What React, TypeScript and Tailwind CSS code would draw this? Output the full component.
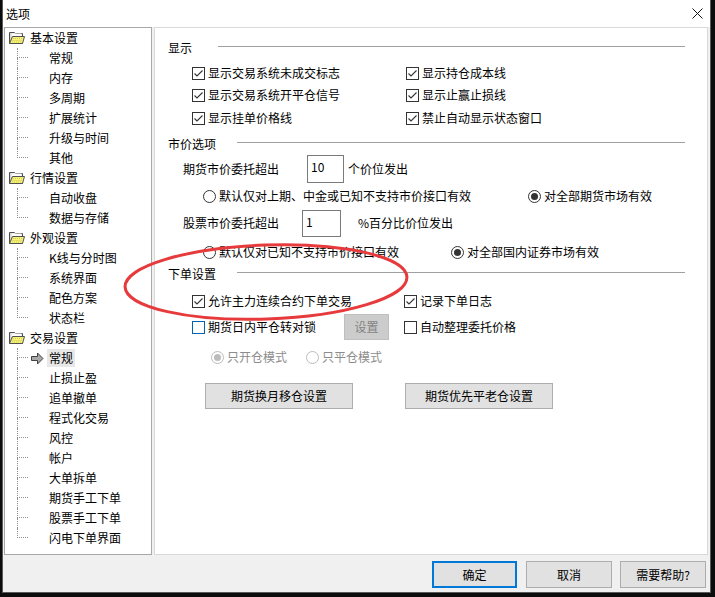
import React from "react";

const groups: { name: string; children: string[]; sel?: number }[] = [
  { name: "基本设置", children: ["常规", "内存", "多周期", "扩展统计", "升级与时间", "其他"] },
  { name: "行情设置", children: ["自动收盘", "数据与存储"] },
  { name: "外观设置", children: ["K线与分时图", "系统界面", "配色方案", "状态栏"] },
  {
    name: "交易设置",
    children: ["常规", "止损止盈", "追单撤单", "程式化交易", "风控", "帐户", "大单拆单", "期货手工下单", "股票手工下单", "闪电下单界面"],
    sel: 0,
  },
];

function Folder() {
  return (
    <svg width="16" height="14" viewBox="0 0 16 14" className="shrink-0">
      <path d="M0.5 1.5 H5.5 L6.5 2.5 H13.5 V12.5 H0.5 Z" fill="#d8d8d8" stroke="#505050" />
      <path d="M2.5 2.5 H12.5 V5.5 H2.5 Z" fill="#ffffff" />
      <path d="M3.5 5.5 H15.5 L13.5 12.5 H0.5 Z" fill="#f6f27a" stroke="#505050" />
      <path d="M4 7.5 H14 M3.5 9.5 H13.5 M3 11 H13" stroke="#c9c23a" strokeWidth="0.8" strokeDasharray="1 1" />
    </svg>
  );
}

function Arrow() {
  return (
    <svg width="13" height="13" viewBox="0 0 13 13" className="shrink-0">
      <path d="M0.5 4.5 H6.5 V1 L12 6.5 L6.5 12 V8.5 H0.5 Z" fill="#a8a8a8" stroke="#404040" />
    </svg>
  );
}

function Check({ checked, focus }: { checked?: boolean; focus?: boolean }) {
  return (
    <span
      className={
        focus
          ? "w-[13px] h-[13px] border border-[#0063b1] bg-white flex items-center justify-center shrink-0"
          : "w-[13px] h-[13px] border border-[#333333] bg-white flex items-center justify-center shrink-0"
      }
    >
      {checked && (
        <svg width="11" height="11" viewBox="0 0 11 11">
          <path d="M1.5 5.5 L4 8 L9.5 2.5" fill="none" stroke="#333333" strokeWidth="1.1" />
        </svg>
      )}
    </span>
  );
}

function Radio({ on, disabled }: { on?: boolean; disabled?: boolean }) {
  return (
    <span
      className={
        disabled
          ? "w-[13px] h-[13px] rounded-full border border-[#bcbcbc] bg-white flex items-center justify-center shrink-0"
          : "w-[13px] h-[13px] rounded-full border border-[#333333] bg-white flex items-center justify-center shrink-0"
      }
    >
      {on && (
        <span className={disabled ? "w-[7px] h-[7px] rounded-full bg-[#bcbcbc]" : "w-[7px] h-[7px] rounded-full bg-[#333333]"} />
      )}
    </span>
  );
}

function Header({ text, gap }: { text: string; gap: string }) {
  return (
    <div className="h-5 flex items-center ml-[13px] mr-[22px]">
      <span className="leading-none">{text}</span>
      <div className={`flex-1 h-px bg-[#a0a0a0] -mt-[3px] ${gap}`} />
    </div>
  );
}

function CheckItem({ label, checked, focus }: { label: string; checked?: boolean; focus?: boolean }) {
  return (
    <div className="flex items-center">
      <Check checked={checked} focus={focus} />
      <span className="ml-[3px] leading-none">{label}</span>
    </div>
  );
}

function RadioItem({ label, on, disabled }: { label: string; on?: boolean; disabled?: boolean }) {
  return (
    <div className="flex items-center">
      <Radio on={on} disabled={disabled} />
      <span className={disabled ? "ml-[3px] leading-none text-[#8c8c8c]" : "ml-[3px] leading-none"}>{label}</span>
    </div>
  );
}

export default function App() {
  return (
    <div className="relative w-[715px] h-[597px] bg-[#0c0c0c] overflow-hidden font-['Noto_Sans_CJK_SC',sans-serif] text-[12px] text-black">
      <div className="ml-[2px] w-[709px] h-[593px] border-l border-r border-b border-[#5a5a5a] bg-[#f0f0f0] flex flex-col">
        {/* title bar */}
        <div className="h-[27px] bg-white flex items-center justify-between pl-[3px] pr-[7px] shrink-0">
          <span className="leading-none">选项</span>
          <svg width="11" height="11" viewBox="0 0 11 11">
            <path d="M0.5 0.5 L10.5 10.5 M10.5 0.5 L0.5 10.5" stroke="#111" strokeWidth="1" />
          </svg>
        </div>
        {/* body */}
        <div className="flex pl-px pr-[2px] h-[528px] shrink-0">
          {/* tree */}
          <div className="w-[148px] h-full border border-[#a8a8a8] bg-white shrink-0">
            {groups.map((g) => (
              <div key={g.name}>
                <div className="h-5 flex items-center">
                  <span className="ml-[4px]">
                    <Folder />
                  </span>
                  <span className="ml-[5px] leading-none">{g.name}</span>
                </div>
                {g.children.map((c, i) => {
                  const last = i === g.children.length - 1;
                  const sel = g.sel === i;
                  return (
                    <div key={c + i} className="h-5 flex items-stretch">
                      <div className="w-[12px] shrink-0" />
                      <div className="w-[11px] flex flex-col shrink-0">
                        <div className="h-[10px] border-l border-b border-dotted border-[#909090]" />
                        {!last && <div className="flex-1 border-l border-dotted border-[#909090]" />}
                      </div>
                      <div className="w-[21px] flex items-center shrink-0">
                        {sel && (
                          <span className="ml-[3px]">
                            <Arrow />
                          </span>
                        )}
                      </div>
                      <div className="flex items-center">
                        {sel ? (
                          <span className="-ml-[2px] px-[2px] h-[18px] flex items-center bg-[#e8e8e8] leading-none">{c}</span>
                        ) : (
                          <span className="leading-none">{c}</span>
                        )}
                      </div>
                    </div>
                  );
                })}
              </div>
            ))}
          </div>
          {/* right panel */}
          <div className="ml-[2px] flex-1 h-full border border-[#d9d9d9] bg-white pt-[10px] flex flex-col">
            <Header text="显示" gap="ml-[26px]" />
            <div className="mt-[5px] h-5 flex items-center ml-[37px]">
              <div className="w-[214px]">
                <CheckItem label="显示交易系统未成交标志" checked />
              </div>
              <CheckItem label="显示持仓成本线" checked />
            </div>
            <div className="mt-[2px] h-5 flex items-center ml-[37px]">
              <div className="w-[214px]">
                <CheckItem label="显示交易系统开平仓信号" checked />
              </div>
              <CheckItem label="显示止赢止损线" checked />
            </div>
            <div className="mt-[3px] h-5 flex items-center ml-[37px]">
              <div className="w-[214px]">
                <CheckItem label="显示挂单价格线" checked />
              </div>
              <CheckItem label="禁止自动显示状态窗口" checked />
            </div>
            <div className="mt-[6px]">
              <Header text="市价选项" gap="ml-[21px]" />
            </div>
            <div className="mt-px h-[28px] flex items-center ml-[28px]">
              <span className="w-[124px] leading-none">期货市价委托超出</span>
              <div className="w-[37px] h-[28px] border border-[#7a7a7a] bg-white pl-[3px] pt-[4px] leading-[14px]">10</div>
              <span className="ml-[4px] leading-none">个价位发出</span>
            </div>
            <div className="mt-[3px] h-5 flex items-center ml-[48px]">
              <div className="w-[325px]">
                <RadioItem label="默认仅对上期、中金或已知不支持市价接口有效" />
              </div>
              <RadioItem label="对全部期货市场有效" on />
            </div>
            <div className="mt-[3px] h-[28px] flex items-center ml-[28px]">
              <span className="w-[119px] leading-none">股票市价委托超出</span>
              <div className="w-[39px] h-[27px] border border-[#7a7a7a] bg-white pl-[3px] pt-[4px] leading-[14px]">1</div>
              <span className="ml-[17px] leading-none">%百分比价位发出</span>
            </div>
            <div className="mt-[5px] h-5 flex items-center ml-[48px]">
              <div className="w-[248px]">
                <RadioItem label="默认仅对已知不支持市价接口有效" />
              </div>
              <RadioItem label="对全部国内证券市场有效" on />
            </div>
            <div className="mt-[2px]">
              <Header text="下单设置" gap="ml-[21px]" />
            </div>
            <div className="mt-[7px] h-5 flex items-center ml-[37px]">
              <div className="w-[212px]">
                <CheckItem label="允许主力连续合约下单交易" checked />
              </div>
              <CheckItem label="记录下单日志" checked />
            </div>
            <div className="mt-[3px] h-[26px] flex items-center ml-[37px]">
              <div className="w-[212px] flex items-center">
                <div className="w-[152px]">
                  <CheckItem label="期货日内平仓转对锁" focus />
                </div>
                <div className="w-[45px] h-[26px] border border-[#bfbfbf] bg-[#cccccc] text-[#838383] flex items-center justify-center leading-none">
                  设置
                </div>
              </div>
              <CheckItem label="自动整理委托价格" />
            </div>
            <div className="mt-[7px] h-5 flex items-center ml-[56px]">
              <div className="w-[95px]">
                <RadioItem label="只开仓模式" on disabled />
              </div>
              <RadioItem label="只平仓模式" disabled />
            </div>
            <div className="mt-[16px] h-[26px] flex items-center ml-[50px]">
              <div className="w-[148px] h-[26px] border border-[#adadad] bg-[#e1e1e1] flex items-center justify-center leading-none">
                期货换月移仓设置
              </div>
              <div className="ml-[52px] w-[148px] h-[26px] border border-[#adadad] bg-[#e1e1e1] flex items-center justify-center leading-none">
                期货优先平老仓设置
              </div>
            </div>
          </div>
        </div>
        {/* footer */}
        <div className="flex justify-end pr-[4px] pt-[6px]">
          <div className="w-[85px] h-[27px] border-2 border-[#0078d7] bg-[#e1e1e1] flex items-center justify-center leading-none">确定</div>
          <div className="ml-[9px] w-[86px] h-[27px] border border-[#adadad] bg-[#e1e1e1] flex items-center justify-center leading-none">取消</div>
          <div className="ml-[8px] w-[86px] h-[27px] border border-[#adadad] bg-[#e1e1e1] flex items-center justify-center leading-none">需要帮助?</div>
        </div>
      </div>
      {/* red annotation ellipse */}
      <svg className="absolute left-0 top-0 pointer-events-none" width="715" height="597" viewBox="0 0 715 597">
        <ellipse cx="266" cy="282" rx="141" ry="37" transform="rotate(-2 266 282)" fill="none" stroke="#e63a3c" strokeWidth="3" />
      </svg>
    </div>
  );
}
